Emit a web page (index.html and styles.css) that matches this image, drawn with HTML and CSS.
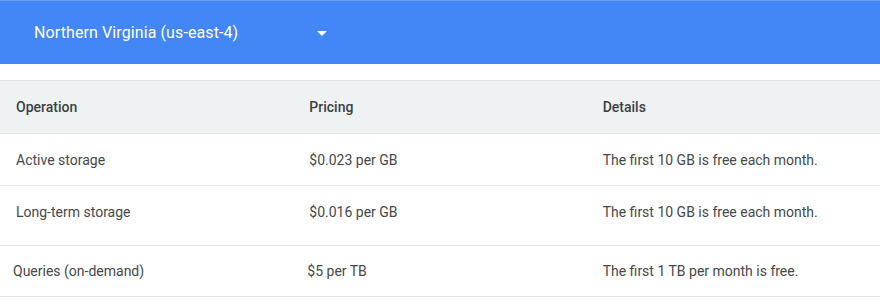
FILE: index.html
```html
<!DOCTYPE html>
<html lang="en">
<head>
    <meta charset="UTF-8">
    <title>BigQuery pricing</title>
    <link rel="stylesheet" href="styles.css">
</head>
<body>
    <div class="region-bar">
        <div class="region-select">
            <span class="region-name">Northern Virginia (us-east-4)</span>
            <span class="caret"></span>
        </div>
    </div>

    <div class="pricing-table">
        <div class="row head">
            <div class="cell">Operation</div>
            <div class="cell">Pricing</div>
            <div class="cell">Details</div>
        </div>
        <div class="row">
            <div class="cell">Active storage</div>
            <div class="cell">$0.023 per GB</div>
            <div class="cell">The first 10 GB is free each month.</div>
        </div>
        <div class="row tall">
            <div class="cell">Long-term storage</div>
            <div class="cell">$0.016 per GB</div>
            <div class="cell">The first 10 GB is free each month.</div>
        </div>
        <div class="row shifted">
            <div class="cell">Queries (on-demand)</div>
            <div class="cell">$5 per TB</div>
            <div class="cell">The first 1 TB per month is free.</div>
        </div>
    </div>
</body>
</html>
```

FILE: styles.css
```css
body {
    margin: 0;
    font-family: Roboto, "Liberation Sans", Arial, sans-serif;
    background: #fff;
    color: #45484b;
}

.region-bar {
    background: #4287f5;
    border-top: 1px solid #6a9ff3;
    height: 63px;
    display: flex;
    align-items: center;
    padding-left: 34px;
}

.region-select {
    display: flex;
    align-items: center;
    width: 293px;
    justify-content: space-between;
}

.region-name {
    color: #fff;
    font-size: 16px;
    letter-spacing: 0.1px;
}

.caret {
    width: 0;
    height: 0;
    border-left: 5px solid transparent;
    border-right: 5px solid transparent;
    border-top: 5px solid #fff;
    margin-top: 1px;
}

.pricing-table {
    margin-top: 16px;
    border-top: 1px solid #e3e6e8;
}

.row {
    display: grid;
    grid-template-columns: 1fr 1fr 1fr;
    align-items: center;
    height: 51px;
    border-bottom: 1px solid #e3e6e8;
    font-size: 14px;
}

.row.head {
    height: 52px;
    background: #eff2f3;
    color: #3c4043;
    font-weight: 500;
}

.row.tall {
    box-sizing: border-box;
    height: 60px;
    padding-bottom: 8px;
}

.row.shifted {
    height: 50px;
}

.cell {
    padding-left: 16px;
}

.row.shifted .cell:first-child {
    padding-left: 13px;
}

.row.shifted .cell:nth-child(2) {
    padding-left: 14px;
}
```
